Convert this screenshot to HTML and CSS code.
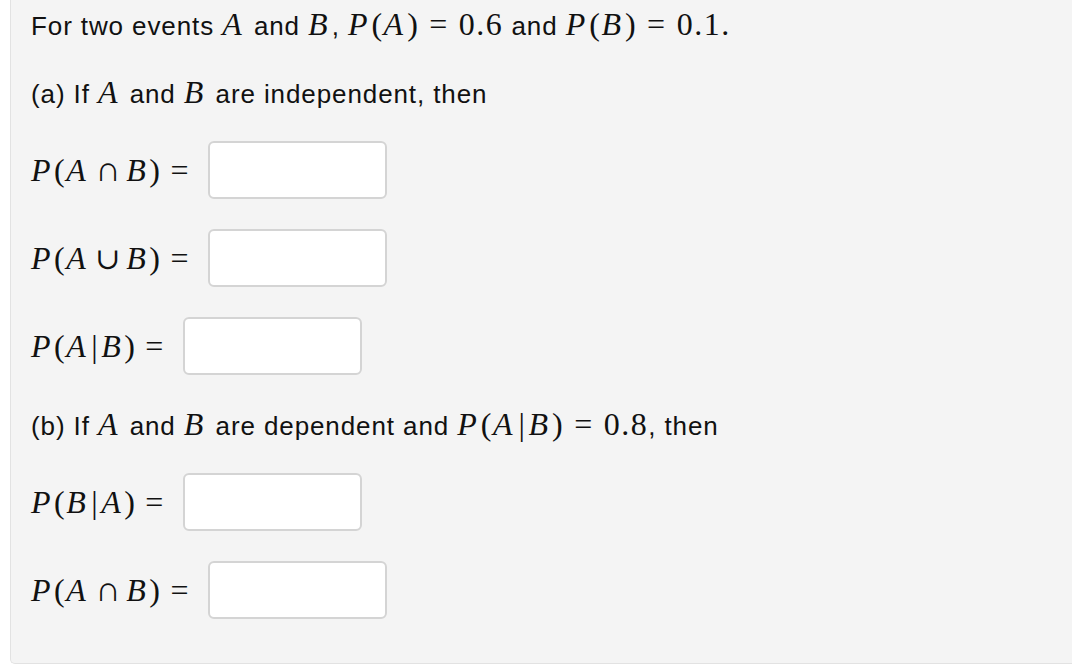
FILE: index.html
```html
<!DOCTYPE html>
<html>
<head>
<meta charset="utf-8">
<link rel="stylesheet" href="styles.css">
</head>
<body>
<div class="panel">
  <p class="line first">For two events <span class="m"><i>A</i></span> and <span class="m"><i>B</i></span>, <span class="m"><i>P</i>(<i>A</i>)<span class="rel">=</span>0.6</span> and <span class="m"><i>P</i>(<i>B</i>)<span class="rel">=</span>0.1.</span></p>
  <p class="line part">(a) If <span class="m"><i>A</i></span> and <span class="m"><i>B</i></span> are independent, then</p>

  <div class="row r1">
    <span class="label m"><i>P</i>(<i>A</i><span class="op">∩</span><i>B</i>)<span class="eq">=</span></span>
    <input class="answer" type="text">
  </div>
  <div class="row r2">
    <span class="label m"><i>P</i>(<i>A</i><span class="op cup">∪</span><i>B</i>)<span class="eq">=</span></span>
    <input class="answer" type="text">
  </div>
  <div class="row r3">
    <span class="label m"><i>P</i>(<i>A</i><span class="bar">|</span><i>B</i>)<span class="eq">=</span></span>
    <input class="answer" type="text">
  </div>

  <p class="line part b">(b) If <span class="m"><i>A</i></span> and <span class="m"><i>B</i></span> are dependent and <span class="m"><i>P</i>(<i>A</i><span class="bar">|</span><i>B</i>)<span class="rel">=</span>0.8</span>, then</p>

  <div class="row r4">
    <span class="label m"><i>P</i>(<i>B</i><span class="bar">|</span><i>A</i>)<span class="eq">=</span></span>
    <input class="answer" type="text">
  </div>
  <div class="row r5">
    <span class="label m"><i>P</i>(<i>A</i><span class="op">∩</span><i>B</i>)<span class="eq">=</span></span>
    <input class="answer" type="text">
  </div>
</div>
</body>
</html>
```

FILE: styles.css
```css
html, body {
  margin: 0;
  padding: 0;
  background: #ffffff;
}

.panel {
  margin-left: 10px;
  height: 664px;
  box-sizing: border-box;
  background: #f4f4f4;
  border-left: 1px solid #e2e2e2;
  border-bottom: 1px solid #e2e2e2;
  border-bottom-left-radius: 5px;
  padding: 9px 0 0 20px;
  font-family: "Liberation Sans", Arial, Helvetica, sans-serif;
  font-size: 26px;
  letter-spacing: 0.9px;
  color: #111111;
}

.line {
  margin: 0;
  height: 30px;
  line-height: 30px;
  white-space: nowrap;
}

.part {
  margin-top: 38px;
}

.part.b {
  margin-top: 34px;
}

.m {
  font-family: "Liberation Serif", "DejaVu Serif", "Times New Roman", serif;
  font-size: 32px;
  font-style: normal;
  letter-spacing: 1.5px;
}

.m i {
  font-style: italic;
  letter-spacing: 4px;
}

.rel {
  margin: 0 10px;
}

.row {
  display: flex;
  align-items: center;
  height: 58px;
  margin-top: 30px;
}

.row.r1 {
  margin-top: 34px;
}

.row.r4 {
  margin-top: 34px;
}

.label {
  white-space: nowrap;
  margin-right: 18px;
  font-size: 32px;
  line-height: 40px;
  letter-spacing: 1.5px;
}

.label i {
  letter-spacing: 3.5px;
}

.op {
  display: inline-block;
  width: 25px;
  margin: 0 6px;
  text-align: center;
  letter-spacing: 0;
  font-size: 35px;
  line-height: 30px;
}

.op.cup {
  font-size: 30px;
}

.bar {
  font-style: normal;
  margin: 0 2px;
}

.eq {
  margin-left: 9px;
}

.answer {
  box-sizing: border-box;
  width: 179px;
  height: 58px;
  margin: 0;
  padding: 0 10px;
  background: #ffffff;
  border: 2px solid #d4d4d4;
  border-radius: 6px;
  outline: none;
  font-family: "Liberation Sans", Arial, sans-serif;
  font-size: 24px;
}
```
